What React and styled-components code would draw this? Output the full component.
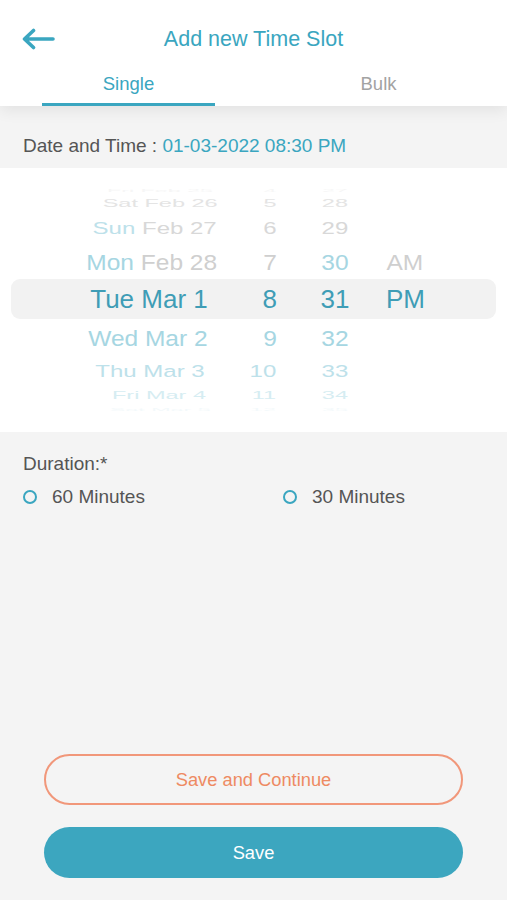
import React from 'react'
import styled, { createGlobalStyle } from 'styled-components'

const GlobalStyle = createGlobalStyle`
  body {
    margin: 0;
    background: #f4f4f4;
    font-family: "Liberation Sans", Arial, sans-serif;
  }
`

const teal = '#3aa6c0'
const sel = '#3f9db6'
const tA = '#a6d6e2'
const tB = '#bde1ea'
const tC = '#d6edf2'
const tD = '#f3f9fb'
const gA = '#cfcfcf'
const gB = '#d8d8d8'
const gC = '#e4e4e4'
const gD = '#f6f6f6'

// wheel rows, top to bottom; h = slot height, sy/sx = squash from the wheel curve, dx = drift of the date text
const rows = [
  { h: 10, sy: 0.16, sx: 0.93, dx: 10, date: [['Fri Feb 25', gD]], hour: ['4', gD], min: ['27', gD] },
  { h: 16, sy: 0.45, sx: 0.94, dx: 10, date: [['Sat Feb 26', gC]], hour: ['5', gC], min: ['28', gC] },
  { h: 34, sy: 0.68, sx: 0.96, dx: 5, date: [['Sun ', tB], ['Feb 27', gB]], hour: ['6', gB], min: ['29', gB] },
  { h: 34, sy: 0.85, sx: 0.98, dx: 2, date: [['Mon ', tA], ['Feb 28', gA]], hour: ['7', gA], min: ['30', tA], ap: ['AM', gA] },
  { h: 40, sy: 1, sx: 1, dx: -1, selected: true, date: [['Tue Mar 1', sel]], hour: ['8', sel], min: ['31', sel], ap: ['PM', sel] },
  { h: 38, sy: 0.87, sx: 0.98, dx: -2, date: [['Wed Mar 2', tA]], hour: ['9', tA], min: ['32', tA] },
  { h: 28, sy: 0.68, sx: 0.96, dx: 0, date: [['Thu Mar 3', tB]], hour: ['10', tB], min: ['33', tB] },
  { h: 20, sy: 0.45, sx: 0.94, dx: 9, date: [['Fri Mar 4', tC]], hour: ['11', tC], min: ['34', tC] },
  { h: 8, sy: 0.16, sx: 0.93, dx: 10, date: [['Sat Mar 5', tD]], hour: ['12', tD], min: ['35', tD] },
]

const App = () => {
  return (
    <Page>
      <GlobalStyle />
      <Header>
        <TitleRow>
          <BackButton>
            <svg width="34" height="22" viewBox="0 0 34 22" fill="none">
              <path
                d="M32 11H4M12.5 2.5L3.5 11l9 8.5"
                stroke={teal}
                strokeWidth="3.6"
                strokeLinecap="round"
                strokeLinejoin="round"
              />
            </svg>
          </BackButton>
          <Title>Add new Time Slot</Title>
          <span />
        </TitleRow>
        <Tabs>
          <Tab active>Single</Tab>
          <Tab>Bulk</Tab>
        </Tabs>
      </Header>

      <DateLine>
        Date and Time : <DateValue>01-03-2022 08:30 PM</DateValue>
      </DateLine>

      <Picker>
        {rows.map((r, i) => (
          <WheelRow key={i} h={r.h} selected={r.selected}>
            <DateCell>
              <Squash sx={r.sx} sy={r.sy} dx={r.dx}>
                {r.date.map(([t, c], j) => (
                  <Part key={j} color={c}>
                    {t}
                  </Part>
                ))}
              </Squash>
            </DateCell>
            <HourCell>
              <Squash sx={r.sx} sy={r.sy}>
                <Part color={r.hour[1]}>{r.hour[0]}</Part>
              </Squash>
            </HourCell>
            <MinCell>
              <Squash sx={r.sx} sy={r.sy}>
                <Part color={r.min[1]}>{r.min[0]}</Part>
              </Squash>
            </MinCell>
            <ApCell>
              {r.ap && (
                <Squash sx={r.sx} sy={r.sy}>
                  <Part color={r.ap[1]}>{r.ap[0]}</Part>
                </Squash>
              )}
            </ApCell>
          </WheelRow>
        ))}
      </Picker>

      <Duration>
        <Label>Duration:*</Label>
        <Options>
          <Option>
            <Radio />
            60 Minutes
          </Option>
          <Option>
            <Radio />
            30 Minutes
          </Option>
        </Options>
      </Duration>

      <Footer>
        <OutlineButton>Save and Continue</OutlineButton>
        <SolidButton>Save</SolidButton>
      </Footer>
    </Page>
  )
}
export default App

const Page = styled.div`
  min-height: 100vh;
  display: flex;
  flex-direction: column;
  background: #f4f4f4;
`

const Header = styled.div`
  position: relative;
  z-index: 1;
  background: #fff;
  box-shadow: 0 5px 14px rgba(0, 0, 0, 0.07);
`

const TitleRow = styled.div`
  height: 42px;
  padding-top: 18px;
  display: grid;
  grid-template-columns: 70px 1fr 70px;
  align-items: center;
`

const BackButton = styled.div`
  display: flex;
  align-items: center;
  padding-left: 21px;
  height: 42px;
`

const Title = styled.div`
  text-align: center;
  font-size: 21.5px;
  color: ${teal};
`

const Tabs = styled.div`
  display: flex;
  justify-content: space-between;
  padding: 0 42px;
`

const Tab = styled.div`
  width: 173px;
  height: 38px;
  padding-top: 5px;
  display: flex;
  align-items: center;
  justify-content: center;
  font-size: 18.5px;
  color: ${p => (p.active ? teal : '#a3a3a3')};
  border-bottom: 3px solid ${p => (p.active ? teal : 'transparent')};
`

const DateLine = styled.div`
  padding: 29px 23px 11px;
  font-size: 19px;
  line-height: 22px;
  color: #555;
`

const DateValue = styled.span`
  color: ${teal};
`

const Picker = styled.div`
  background: #fff;
  padding: 17px 11px 19px;
  display: flex;
  flex-direction: column;
`

const WheelRow = styled.div`
  height: ${p => p.h}px;
  display: flex;
  align-items: center;
  padding-left: 72px;
  border-radius: 9px;
  background: ${p => (p.selected ? '#f2f2f2' : 'transparent')};
  font-size: ${p => (p.selected ? 26 : 25)}px;
  line-height: 1;
  white-space: nowrap;
`

const DateCell = styled.div`
  width: 134px;
  display: flex;
  justify-content: center;
`

const HourCell = styled.div`
  width: 60px;
  display: flex;
  justify-content: flex-end;
`

const MinCell = styled.div`
  width: 60px;
  margin-left: 28px;
  display: flex;
  justify-content: center;
`

const ApCell = styled.div`
  margin-left: 21px;
  display: flex;
`

const Squash = styled.span`
  display: inline-block;
  transform: translateX(${p => p.dx || 0}px) scale(${p => p.sx}, ${p => p.sy});
`

const Part = styled.span`
  color: ${p => p.color};
  white-space: pre;
`

const Duration = styled.div`
  padding: 21px 23px 0;
  display: flex;
  flex-direction: column;
  gap: 11px;
`

const Label = styled.div`
  font-size: 19px;
  line-height: 22px;
  color: #555;
`

const Options = styled.div`
  display: grid;
  grid-template-columns: 260px 1fr;
`

const Option = styled.div`
  display: flex;
  align-items: center;
  gap: 15px;
  font-size: 19px;
  line-height: 22px;
  color: #555;
`

const Radio = styled.span`
  width: 10px;
  height: 10px;
  border-radius: 50%;
  border: 2.8px solid ${teal};
  flex-shrink: 0;
`

const Footer = styled.div`
  margin-top: auto;
  padding-bottom: 22px;
  display: flex;
  flex-direction: column;
  align-items: center;
  gap: 22px;
`

const OutlineButton = styled.button`
  width: 419px;
  height: 51px;
  border-radius: 26px;
  border: 2px solid #f1977a;
  background: transparent;
  color: #ee8a62;
  font-family: "Liberation Sans", Arial, sans-serif;
  font-size: 18.3px;
`

const SolidButton = styled.button`
  width: 419px;
  height: 51px;
  border-radius: 26px;
  border: none;
  background: #3ca6bf;
  color: #fff;
  font-family: "Liberation Sans", Arial, sans-serif;
  font-size: 18.3px;
`
